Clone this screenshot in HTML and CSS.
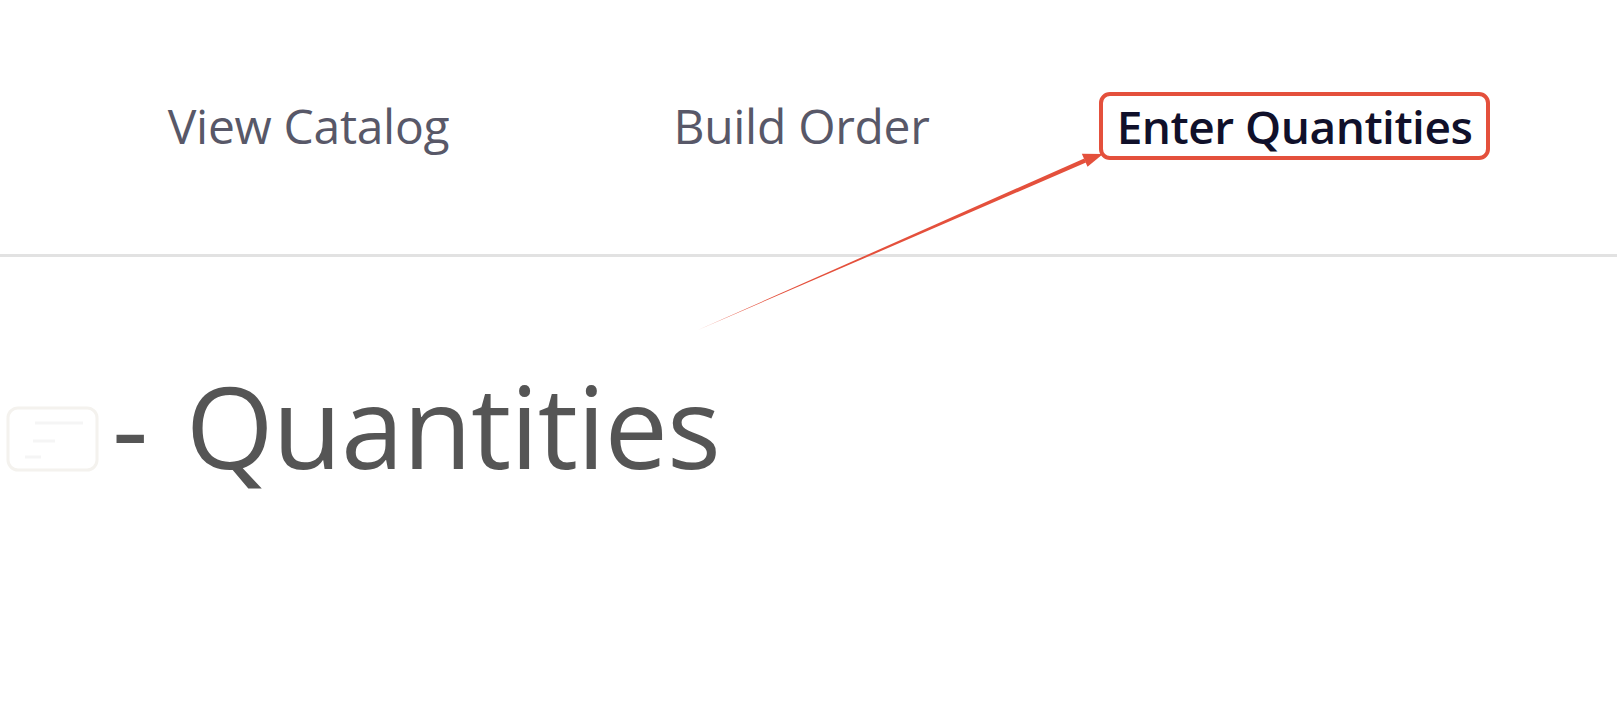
FILE: index.html
```html
<!DOCTYPE html>
<html lang="en">
<head>
  <meta charset="UTF-8">
  <title>Enter Quantities</title>
  <link rel="stylesheet" href="styles.css">
</head>
<body>
  <header class="topnav">
    <a class="nav-item" href="#">View Catalog</a>
    <a class="nav-item" href="#">Build Order</a>
    <a class="nav-item active" href="#">Enter Quantities</a>
  </header>

  <main class="page">
    <h1 class="page-title">
      <svg class="title-icon" width="95" height="68" viewBox="0 0 95 68">
        <rect x="3" y="3" width="89" height="62" rx="10" fill="#fff" stroke="#f4f2ee" stroke-width="3"/>
        <path d="M30 18h48M28 36h22M20 52h16" stroke="#f5f5f5" stroke-width="3" fill="none"/>
      </svg>
      <span>- Quantities</span>
    </h1>
  </main>

  <!-- callout arrow pointing at the active tab -->
  <svg class="callout" width="1617" height="718" viewBox="0 0 1617 718">
    <polygon fill="#e4503c" points="698,330 1086,162.5 1084.2,158.4"/>
    <polygon fill="#e4503c" points="1103,154 1081.8,153.7 1087.5,166.8"/>
  </svg>
</body>
</html>
```

FILE: styles.css
```css
/* Global */
body {
  margin: 0;
  padding: 0;
  background: #fff;
  font-family: 'Open Sans', 'Noto Sans', sans-serif;
  position: relative;
  min-height: 718px;
  overflow: hidden;
}
/* Top navigation */
.topnav {
  display: grid;
  grid-template-columns: repeat(3, 493px);
  justify-items: center;
  align-items: start;
  height: 257px;
  box-sizing: border-box;
  padding: 92px 0 0 62px;
  border-bottom: 3px solid #e2e2e2;
}
.nav-item {
  display: block;
  font-size: 48px;
  line-height: 60px;
  padding: 0 14px;
  border: 4px solid transparent;
  border-radius: 11px;
  color: #585868;
  text-decoration: none;
  letter-spacing: -0.3px;
  white-space: nowrap;
}
.nav-item.active {
  font-size: 46px;
  letter-spacing: -0.5px;
  border-color: #e4503c;
  color: #10102a;
  font-weight: 600;
}
/* Page heading */
.page {
  padding: 0 0 0 5px;
}
.page-title {
  display: flex;
  align-items: center;
  gap: 12px;
  margin: 91px 0 0;
  font-size: 113px;
  font-weight: 400;
  line-height: 154px;
  color: #555;
  letter-spacing: -1px;
  word-spacing: 10px;
}
.title-icon {
  flex: none;
  margin-top: 28px;
}
/* Annotation overlay */
.callout {
  position: absolute;
  top: 0;
  left: 0;
  pointer-events: none;
}
```
